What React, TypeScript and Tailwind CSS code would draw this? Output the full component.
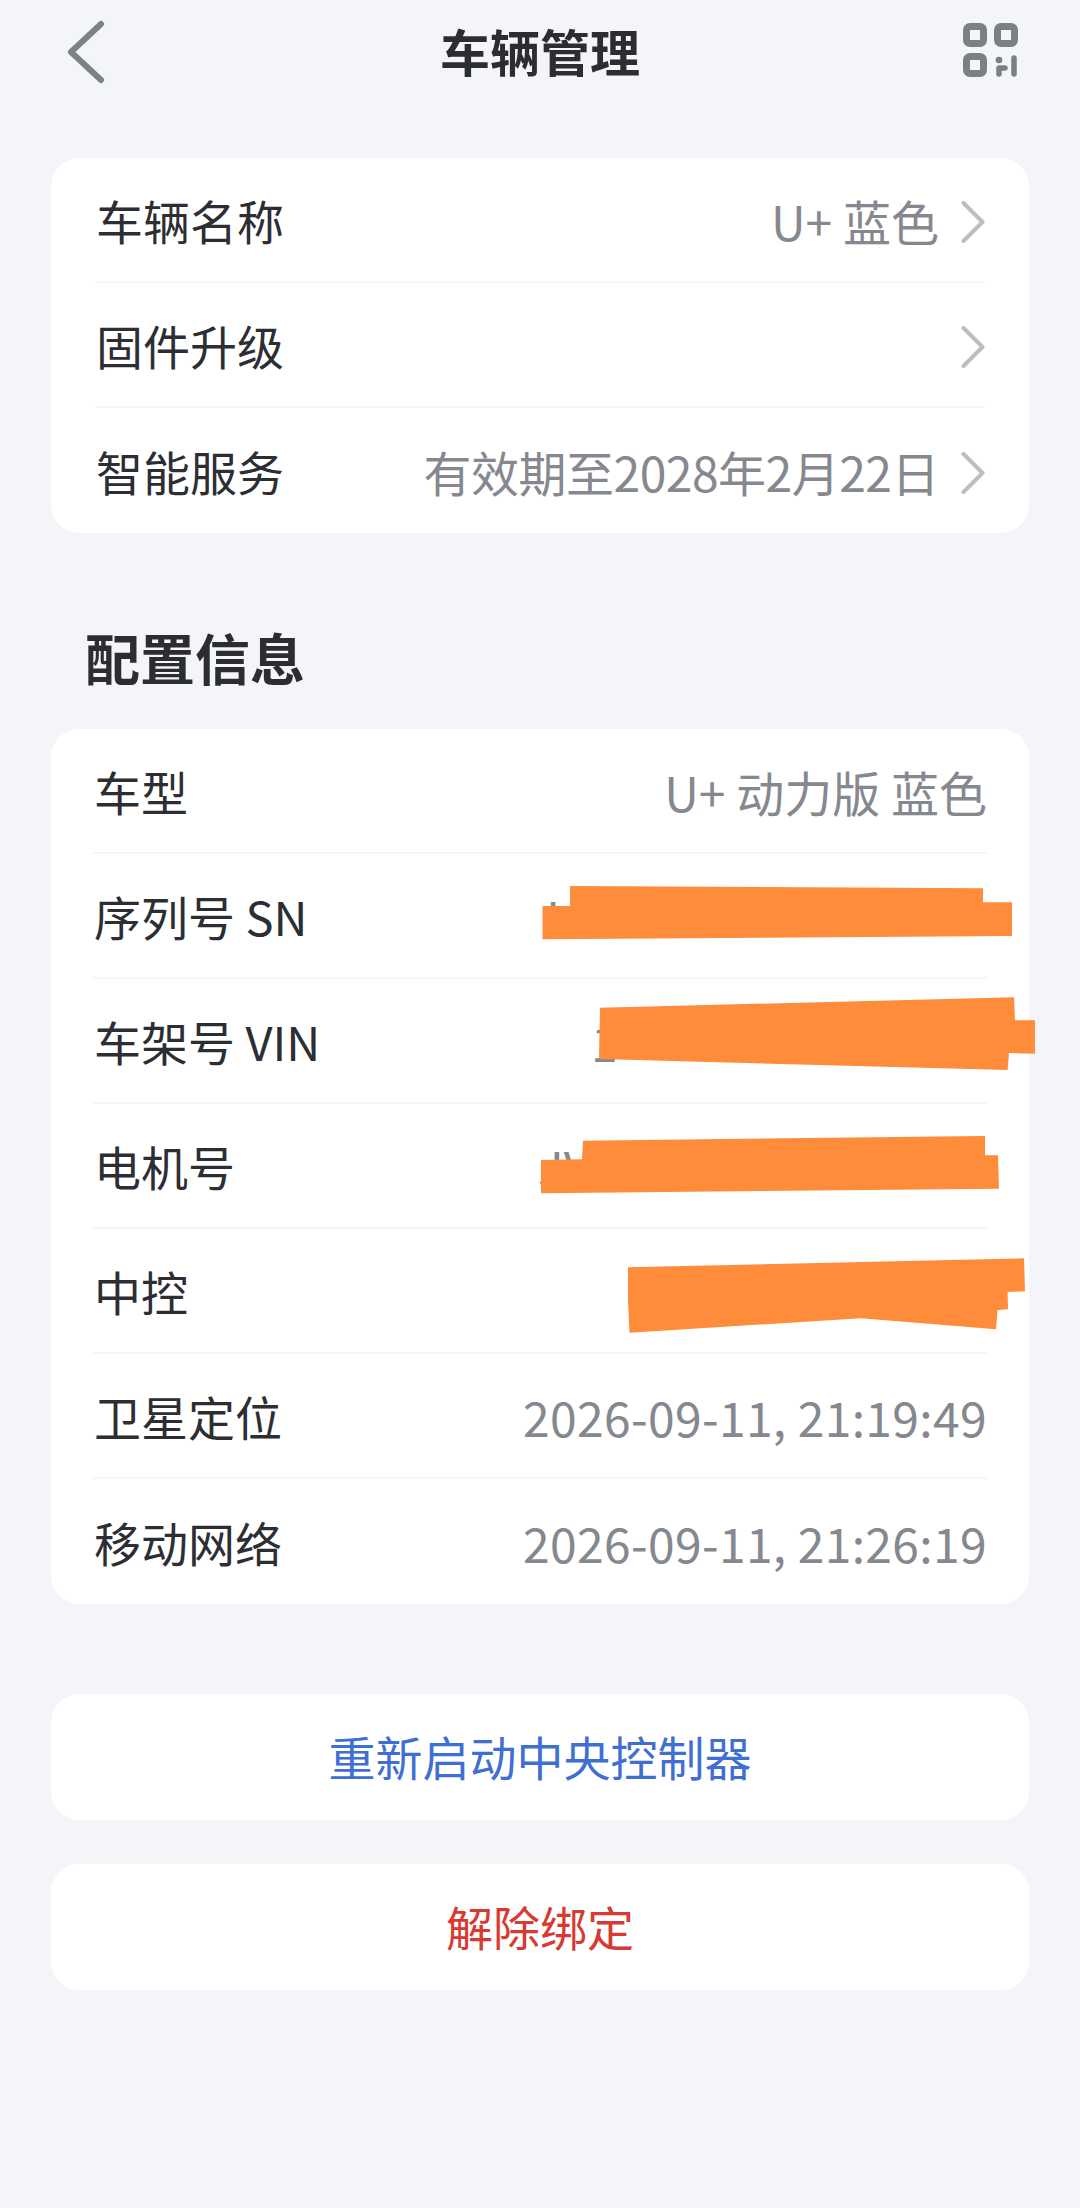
const FONT = "font-['Noto_Sans_CJK_SC','Noto_Sans',sans-serif]";

function Chevron() {
  return (
    <svg width="24" height="42" viewBox="0 0 24 42" className="shrink-0 ml-[22px] mt-[5px]" fill="none">
      <path d="M2.5 2 L21.5 21 L2.5 40" stroke="#bcbec2" strokeWidth="4" strokeLinecap="round" strokeLinejoin="round" />
    </svg>
  );
}

function Row({ label, value, last, chevron, fragment, tone = "" }: { label: string; value?: string; last?: boolean; chevron?: boolean; fragment?: { text: string; box: string }; tone?: string }) {
  return (
    <div className={`h-[125px] flex items-center justify-between ${last ? "" : "border-b-2 border-[#f5f6f8]"}`}>
      <span className="text-[#2c2e33] text-[47px] leading-none whitespace-nowrap ml-[1px]">{label}</span>
      <div className="flex items-center">
        {fragment && <span className={`text-[#85888e] text-[48px] leading-none text-left ${fragment.box}`}>{fragment.text}</span>}
        {value && <span className={`text-[#85888e] text-[48px] leading-none whitespace-nowrap ${tone}`}>{value}</span>}
        {chevron && <Chevron />}
      </div>
    </div>
  );
}

export default function App() {
  return (
    <div className={`relative w-[1080px] h-[2208px] overflow-hidden bg-[#f3f5f9] ${FONT}`}>
      <header className="h-[104px] flex items-center justify-between pl-[66px] pr-[60px]">
        <svg width="40" height="64" viewBox="0 0 40 64" fill="none">
          <path d="M35 4 L5 32 L35 60" stroke="#7d8188" strokeWidth="6" strokeLinecap="round" strokeLinejoin="round" />
        </svg>
        <h1 className="text-[#2b2d31] text-[50px] font-bold leading-none ml-[11px] mt-[-5px]">车辆管理</h1>
        <svg width="57" height="56" viewBox="0 0 57 56" fill="none" className="mt-[-2px]">
          <rect x="3.5" y="3.5" width="17" height="17" rx="3.5" stroke="#7b7f86" strokeWidth="7" />
          <rect x="34.5" y="3.5" width="17" height="17" rx="3.5" stroke="#7b7f86" strokeWidth="7" />
          <rect x="3.5" y="33.5" width="17" height="17" rx="3.5" stroke="#7b7f86" strokeWidth="7" />
          <circle cx="36" cy="37" r="3.3" fill="#7b7f86" />
          <path d="M36 51 V45 H42" stroke="#7b7f86" strokeWidth="5.5" strokeLinecap="round" strokeLinejoin="round" />
          <path d="M51 35 V51" stroke="#7b7f86" strokeWidth="5.5" strokeLinecap="round" />
        </svg>
      </header>

      <section className="mt-[54px] mx-[51px] h-[375px] bg-white rounded-[28px] px-[44px]">
        <Row label="车辆名称" value="U+ 蓝色" chevron />
        <Row label="固件升级" chevron />
        <Row label="智能服务" value="有效期至2028年2月22日" tone="tracking-[-0.5px]" chevron last />
      </section>

      <h2 className="h-[196px] box-border pt-[50px] flex items-center pl-[85px] text-[#2b2d31] text-[55px] font-bold leading-none">配置信息</h2>

      <section className="mx-[51px] h-[875px] bg-white rounded-[28px] px-[42px]">
        <Row label="车型" value="U+ 动力版 蓝色" />
        <Row label="序列号 SN" fragment={{ text: "I", box: "w-[441px]" }} />
        <Row label="车架号 VIN" fragment={{ text: "1", box: "w-[396px]" }} />
        <Row label="电机号" fragment={{ text: "JV", box: "w-[449px]" }} />
        <Row label="中控" />
        <Row label="卫星定位" value="2026-09-11, 21:19:49" tone="tracking-[0.35px]" />
        <Row label="移动网络" value="2026-09-11, 21:26:19" tone="tracking-[0.35px]" last />
      </section>

      <button className="block mt-[90px] mx-[51px] w-[978px] h-[126px] pb-[4px] bg-white rounded-[28px] text-[#3f6fd2] text-[47px] leading-none">重新启动中央控制器</button>
      <button className="block mt-[44px] mx-[51px] w-[978px] h-[126px] pb-[4px] bg-white rounded-[28px] text-[#d63a32] text-[47px] leading-none">解除绑定</button>

      <svg className="absolute left-0 top-0 pointer-events-none" width="1080" height="2208" viewBox="0 0 1080 2208" fill="#ff8c3b">
        <polygon points="570,886 983,888.3 983,902.3 1012,902.3 1012,936 542.5,939.3 542.5,906 570,906" />
        <polygon points="600,1007.7 1014,997.3 1015,1020.3 1035,1020.3 1035,1053.7 1009,1053 1007.6,1070 599,1059" />
        <polygon points="583,1140.7 985,1136 985,1155.3 998,1155.3 999,1188.7 541,1193.3 541,1160 582,1159.3" />
        <polygon points="628,1267.3 1024,1258.3 1025,1291.3 1007.6,1292 1008,1309.3 997.6,1310 996,1329.3 861,1318.3 629.5,1332.7 628,1300" />
      </svg>
    </div>
  );
}
